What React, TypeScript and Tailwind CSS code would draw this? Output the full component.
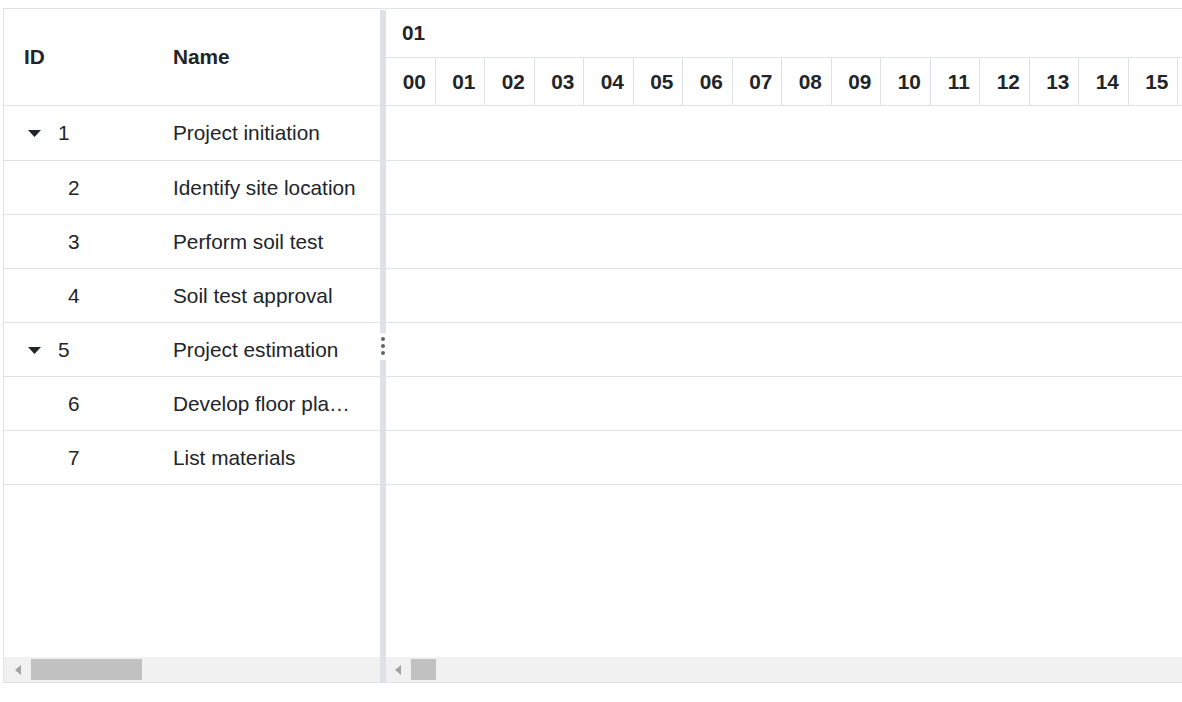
import React from 'react'

type Task = { id: number; name: string; parent?: boolean }

const tasks: Task[] = [
  { id: 1, name: 'Project initiation', parent: true },
  { id: 2, name: 'Identify site location' },
  { id: 3, name: 'Perform soil test' },
  { id: 4, name: 'Soil test approval' },
  { id: 5, name: 'Project estimation', parent: true },
  { id: 6, name: 'Develop floor plan for estimation' },
  { id: 7, name: 'List materials' },
]

const hours = ['00', '01', '02', '03', '04', '05', '06', '07', '08', '09', '10', '11', '12', '13', '14', '15']

function ScrollBar({ arrowLeft, thumbLeft, thumbWidth }: { arrowLeft: number; thumbLeft: number; thumbWidth: number }) {
  return (
    <div className="relative h-[25px] shrink-0 bg-[#f1f1f1]">
      <svg
        className="absolute top-[8px]"
        style={{ left: arrowLeft }}
        width="6"
        height="10"
        viewBox="0 0 6 10"
      >
        <path d="M6 0 L0 5 L6 10 Z" fill="#a3a3a3" />
      </svg>
      <div
        className="absolute top-[2px] h-[21px] bg-[#c1c1c1]"
        style={{ left: thumbLeft, width: thumbWidth }}
      />
    </div>
  )
}

export default function App() {
  return (
    <div className="h-screen w-full overflow-hidden bg-white font-['Liberation_Sans',Arial,sans-serif] text-[20.8px] text-[#212529]">
      <div className="ml-[3px] mt-[8px] flex h-[675px] w-[1185px] border-y border-l border-[#dee2e6]">
        {/* grid side */}
        <div className="flex w-[376px] shrink-0 flex-col">
          <div className="flex h-[97px] shrink-0 items-center border-b border-[#dee2e6] font-bold">
            <div className="w-[149px] pl-[20px]">ID</div>
            <div className="pl-[20px]">Name</div>
          </div>
          <div className="flex-1">
            {tasks.map((t, i) => (
              <div
                key={t.id}
                className={`flex items-center border-b border-[#dee2e6] ${i === 0 ? 'h-[55px]' : 'h-[54px]'}`}
              >
                <div className="flex w-[149px] shrink-0 items-center">
                  {t.parent ? (
                    <div className="flex items-center pl-[24px]">
                      <svg width="13" height="7" viewBox="0 0 13 7" className="mt-[1px]">
                        <path d="M0 0 H13 L6.5 7 Z" fill="#212529" />
                      </svg>
                      <span className="ml-[17px]">{t.id}</span>
                    </div>
                  ) : (
                    <span className="pl-[64px]">{t.id}</span>
                  )}
                </div>
                <div className="min-w-0 flex-1 truncate pl-[20px] pr-[21px]">{t.name}</div>
              </div>
            ))}
          </div>
          <ScrollBar arrowLeft={11} thumbLeft={27} thumbWidth={111} />
        </div>

        {/* splitter */}
        <div className="flex w-[6px] shrink-0 flex-col pt-[1px]">
          <div className="flex-1 bg-[#dee2e6]" />
          <div className="flex h-[27px] flex-col items-center justify-center gap-[3px]">
            <span className="h-[4px] w-[4px] rounded-full bg-[#5f646a]" />
            <span className="h-[4px] w-[4px] rounded-full bg-[#5f646a]" />
            <span className="h-[4px] w-[4px] rounded-full bg-[#5f646a]" />
          </div>
          <div className="flex-1 bg-[#dee2e6]" />
        </div>

        {/* chart side */}
        <div className="flex min-w-0 flex-1 flex-col">
          <div className="h-[97px] shrink-0 border-b border-[#dee2e6] font-bold">
            <div className="flex h-[49px] items-center border-b border-[#dee2e6] pl-[16px]">01</div>
            <div className="flex h-[47px]">
              {hours.map((h) => (
                <div
                  key={h}
                  className="flex w-[49.5px] shrink-0 items-center justify-center border-r border-[#dee2e6] pl-[8px]"
                >
                  {h}
                </div>
              ))}
            </div>
          </div>
          <div className="flex-1">
            {tasks.map((t, i) => (
              <div
                key={t.id}
                className={`border-b border-[#dee2e6] ${i === 0 ? 'h-[55px]' : 'h-[54px]'}`}
              />
            ))}
          </div>
          <ScrollBar arrowLeft={9} thumbLeft={25} thumbWidth={25} />
        </div>
      </div>
    </div>
  )
}
